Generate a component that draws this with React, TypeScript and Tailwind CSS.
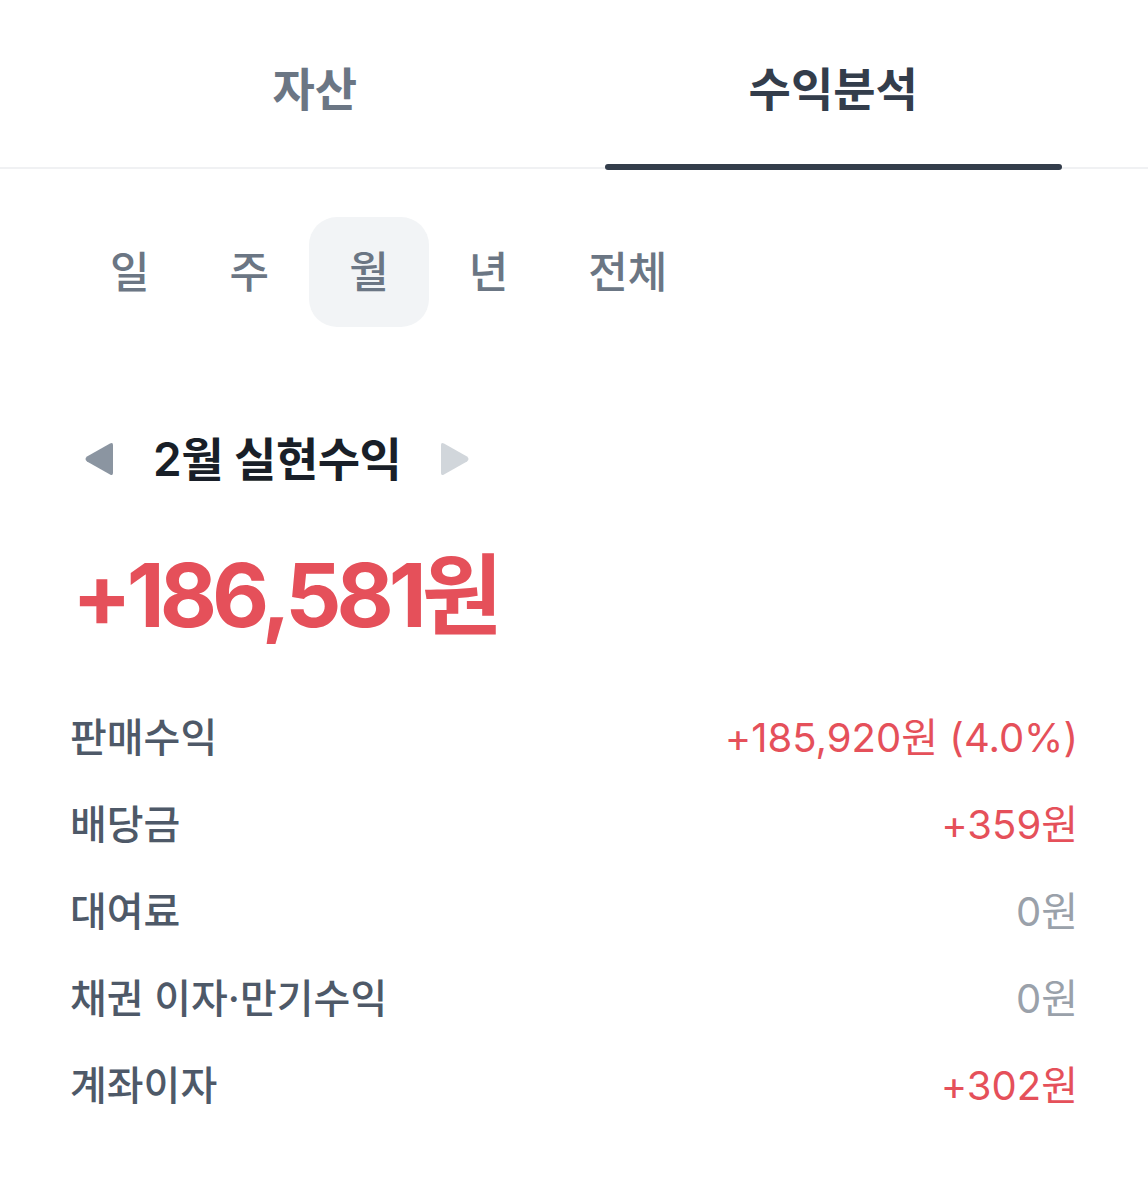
import React, { useState } from 'react';

const FONT = 'font-[Inter,"Noto_Sans_CJK_KR",sans-serif]';

const periods = ['일', '주', '월', '년', '전체'];

const rows = [
  { label: '판매수익', value: '+185,920원 (4.0%)', positive: true },
  { label: '배당금', value: '+359원', positive: true },
  { label: '대여료', value: '0원', positive: false },
  { label: '채권 이자·만기수익', value: '0원', positive: false },
  { label: '계좌이자', value: '+302원', positive: true },
];

export default function App() {
  const [tab, setTab] = useState(1);
  const [period, setPeriod] = useState(2);

  return (
    <div className={`min-h-screen bg-white ${FONT}`}>
      {/* top tabs */}
      <div className="flex h-[169px] gap-[61px] border-b-2 border-[#f0f1f3] px-[86px]">
        {['자산', '수익분석'].map((t, i) => (
          <button
            key={t}
            onClick={() => setTab(i)}
            className={`relative flex flex-1 items-center justify-center pt-[12px] text-[46px] font-semibold ${
              tab === i ? 'text-[#333d4b]' : 'text-[#6b7684]'
            }`}
          >
            {t}
            {tab === i && (
              <span className="absolute right-0 bottom-[-3px] left-0 h-[6px] rounded-full bg-[#333d4b]" />
            )}
          </button>
        ))}
      </div>

      {/* period selector */}
      <div className="mt-[48px] flex px-[70px]">
        {periods.map((p, i) => (
          <button
            key={p}
            onClick={() => setPeriod(i)}
            className={`flex h-[110px] items-center justify-center rounded-[28px] px-[40px] text-[43px] font-medium text-[#6b7684] ${
              period === i ? 'bg-[#f2f4f6]' : ''
            }`}
          >
            {p}
          </button>
        ))}
      </div>

      {/* title */}
      <div className="mt-[102px] flex h-[60px] items-center px-[83px]">
        <svg width="32" height="34" viewBox="0 0 32 34">
          <path d="M30 3 L30 31 Q30 34 27 32.5 L4 19.5 Q1 17 4 14.5 L27 1.5 Q30 0 30 3 Z" fill="#8b95a1" />
        </svg>
        <span className="ml-[38px] text-[46px] font-semibold tracking-[-0.5px] text-[#191f28]">2월 실현수익</span>
        <svg className="ml-[38px]" width="32" height="34" viewBox="0 0 32 34">
          <path d="M2 3 L2 31 Q2 34 5 32.5 L28 19.5 Q31 17 28 14.5 L5 1.5 Q2 0 2 3 Z" fill="#d1d6db" />
        </svg>
      </div>

      {/* amount */}
      <div className="mt-[62px] px-[72px] text-[88px] leading-none font-bold tracking-[-5px] text-[#e5505a]">
        +186,581원
      </div>

      {/* breakdown */}
      <div className="mt-[55px] flex flex-col px-[70px]">
        {rows.map((r) => (
          <div key={r.label} className="flex h-[87px] items-center justify-between">
            <span className="text-[40px] font-medium text-[#4e5968]">{r.label}</span>
            <span className={`text-[40px] ${r.positive ? 'text-[#e5505a]' : 'text-[#9aa1aa]'}`}>{r.value}</span>
          </div>
        ))}
      </div>
    </div>
  );
}
